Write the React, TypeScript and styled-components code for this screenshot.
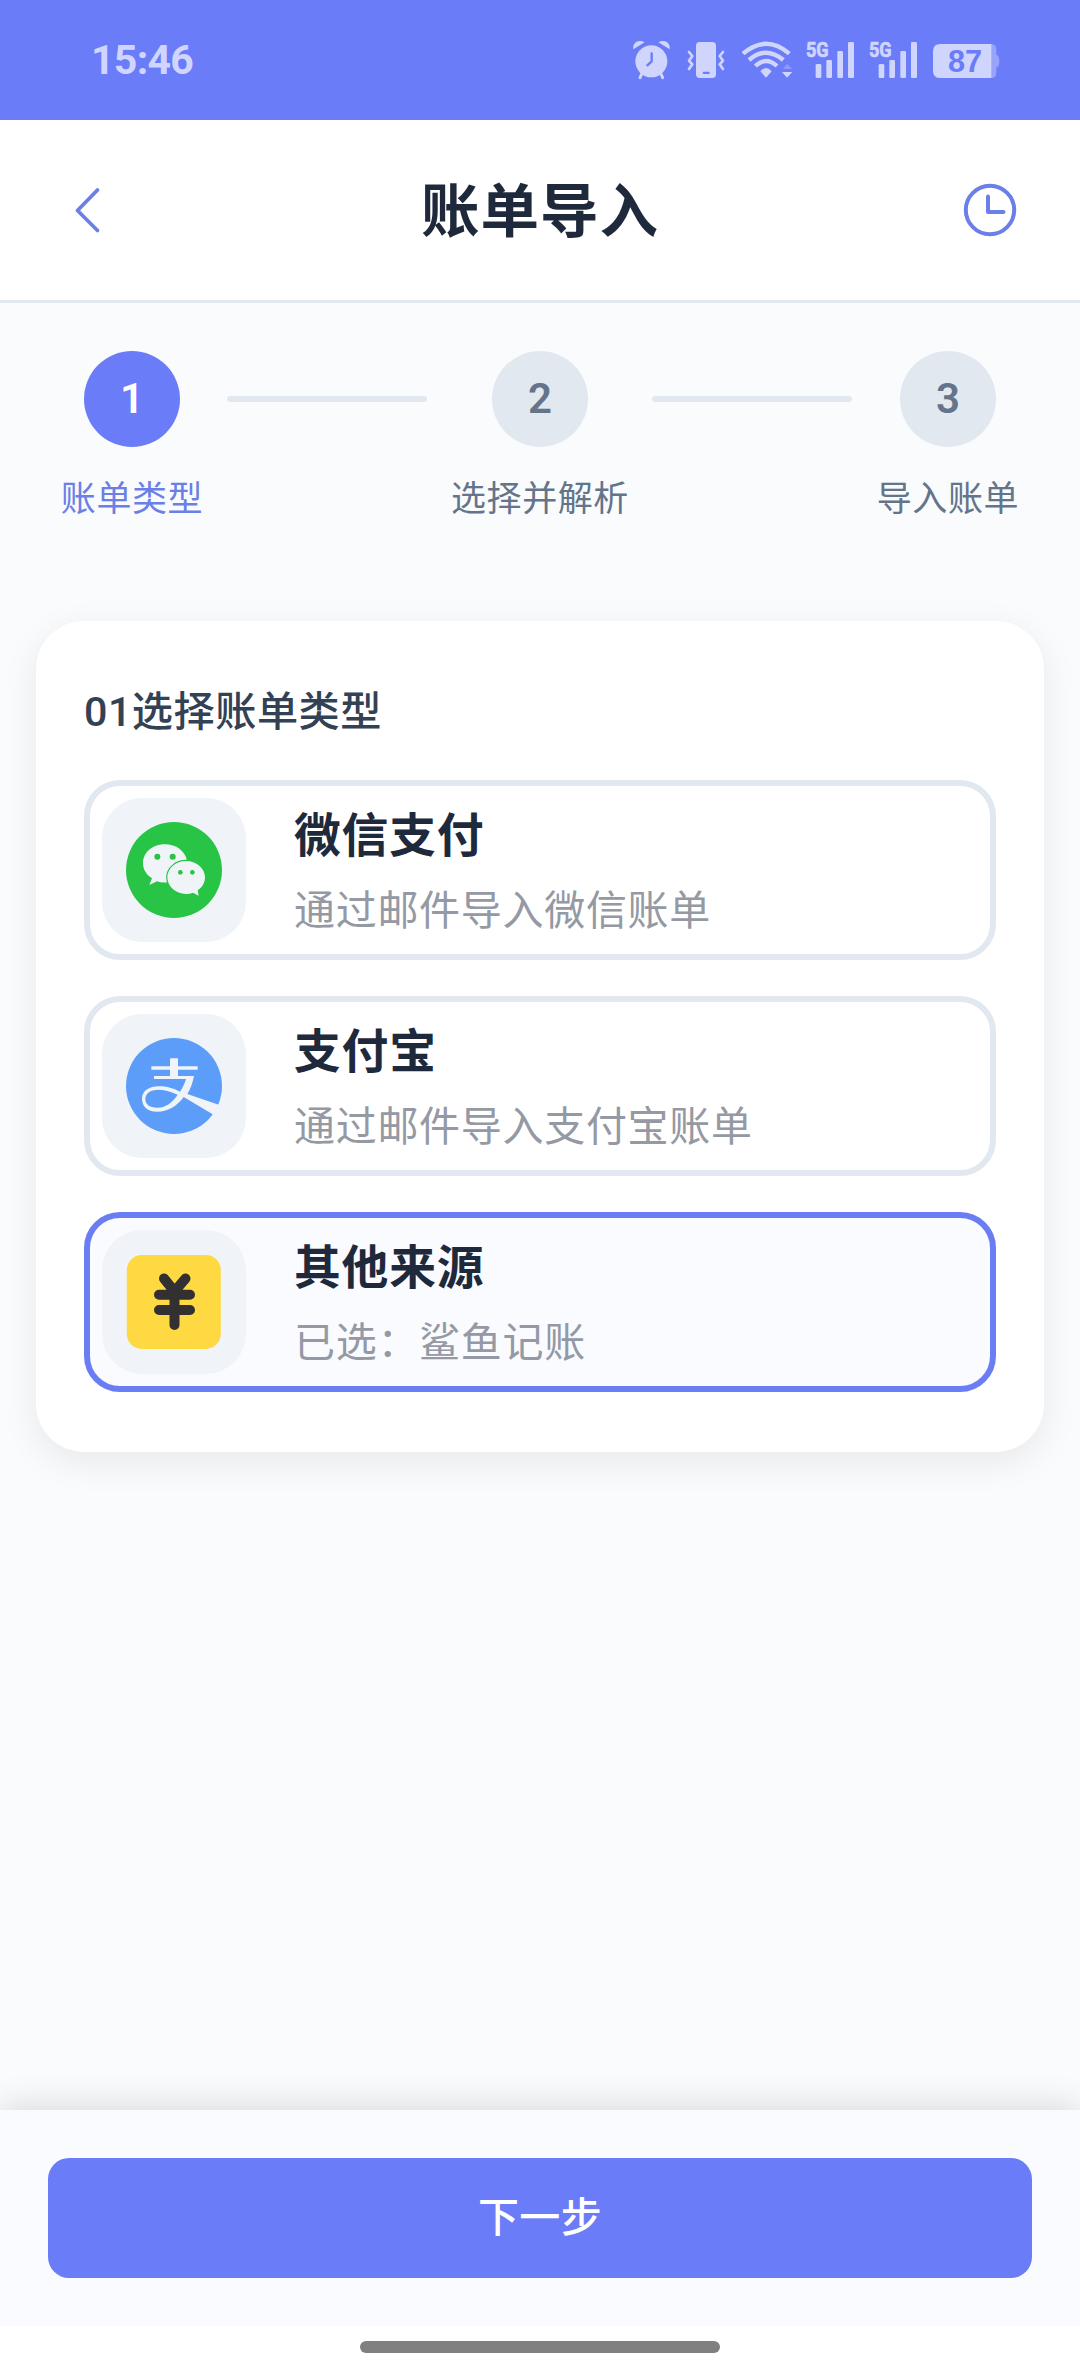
import React from "react";
import styled, { createGlobalStyle } from "styled-components";

const color = {
  primary: "#6a7cf8",
  accent: "#6b7fe8",
  ink: "#1e293b",
  heading: "#334155",
  muted: "#64748b",
  hint: "#9499a3",
  line: "#e2e8f0",
  page: "#f9fbfd",
  tile: "#f0f4f9",
  status: "#d0d5fd",
};

const GlobalStyle = createGlobalStyle`
  * { box-sizing: border-box; }
  body {
    margin: 0;
    font-family: Roboto, "Noto Sans CJK SC", sans-serif;
    background: #fff;
  }
  svg { display: block; flex: none; }
`;

const Screen = styled.div`
  width: 1080px;
  height: 2374px;
  display: flex;
  flex-direction: column;
  background: ${color.page};
  overflow: hidden;
`;

const StatusBar = styled.div`
  flex: none;
  height: 120px;
  padding: 0 73px 0 91px;
  display: flex;
  align-items: center;
  justify-content: space-between;
  background: ${color.primary};
`;

const Time = styled.span`
  font-size: 41px;
  line-height: 48px;
  font-weight: 700;
  letter-spacing: -0.7px;
  color: ${color.status};
`;

const StatusIcons = styled.div`
  display: flex;
  align-items: center;
  fill: ${color.status};
`;

const Header = styled.header`
  flex: none;
  height: 183px;
  padding: 0 60px;
  display: flex;
  align-items: center;
  justify-content: space-between;
  background: #fff;
  border-bottom: 3px solid ${color.line};
`;

const Title = styled.h1`
  margin: 0;
  padding-top: 3px;
  font-size: 58.5px;
  line-height: 72px;
  font-weight: 700;
  letter-spacing: 1px;
  color: ${color.ink};
`;

const HeaderButton = styled.button`
  width: 60px;
  height: 60px;
  padding: 0;
  border: 0;
  background: none;
`;

const Steps = styled.div`
  flex: none;
  display: flex;
  justify-content: space-between;
  padding: 48px 60px 0;
`;

const StepItem = styled.div`
  min-width: 144px;
  display: flex;
  flex-direction: column;
  align-items: center;
  gap: 26px;
`;

const StepCircle = styled.div<{ $active?: boolean }>`
  width: 96px;
  height: 96px;
  padding-bottom: 1px;
  border-radius: 50%;
  display: flex;
  align-items: center;
  justify-content: center;
  font-size: 42px;
  font-weight: 600;
  background: ${(p) => (p.$active ? color.primary : color.line)};
  color: ${(p) => (p.$active ? "#fff" : color.muted)};
`;

const StepLabel = styled.span<{ $active?: boolean }>`
  font-size: 35px;
  line-height: 54px;
  letter-spacing: 0.6px;
  color: ${(p) => (p.$active ? color.accent : color.muted)};
`;

const StepLine = styled.div`
  width: 200px;
  height: 6px;
  margin-top: 45px;
  border-radius: 3px;
  background: ${color.line};
`;

const Card = styled.section`
  flex: none;
  margin: 94px 36px 0;
  height: 831px;
  padding: 60px 48px;
  border-radius: 48px;
  background: #fff;
  box-shadow: 0 10px 36px rgba(0, 0, 0, 0.08);
`;

const CardTitle = styled.h2`
  margin: 0 0 36px;
  font-size: 41.2px;
  line-height: 63px;
  font-weight: 500;
  letter-spacing: 0.5px;
  color: ${color.heading};
`;

const Options = styled.div`
  display: flex;
  flex-direction: column;
  gap: 36px;
`;

const Option = styled.div<{ $selected?: boolean }>`
  height: 180px;
  padding: 0 12px;
  display: flex;
  align-items: center;
  gap: 48px;
  border: 6px solid ${(p) => (p.$selected ? "#6b7df2" : color.line)};
  border-radius: 36px;
  background: ${(p) => (p.$selected ? "#f9fbff" : "#fff")};
`;

const IconTile = styled.div`
  width: 144px;
  height: 144px;
  border-radius: 40px;
  display: flex;
  align-items: center;
  justify-content: center;
  background: ${color.tile};
`;

const OptionText = styled.div`
  display: flex;
  flex-direction: column;
  gap: 9px;
  padding-top: 4px;
`;

const OptionName = styled.span`
  font-size: 46.8px;
  line-height: 70px;
  font-weight: 700;
  letter-spacing: 0.8px;
  color: ${color.ink};
`;

const OptionHint = styled.span`
  font-size: 41px;
  line-height: 63px;
  letter-spacing: 0.7px;
  color: ${color.hint};
`;

const Footer = styled.footer`
  flex: none;
  margin-top: auto;
  padding: 48px;
  background: #f9fbfe;
  box-shadow: 0 -6px 30px rgba(0, 0, 0, 0.12);
`;

const NextButton = styled.button`
  display: block;
  width: 100%;
  height: 120px;
  padding: 0;
  border: 0;
  border-radius: 21px;
  font: 500 41px/60px Roboto, "Noto Sans CJK SC", sans-serif;
  letter-spacing: 0.4px;
  color: #fff;
  background: ${color.primary};
`;

const HomeArea = styled.div`
  flex: none;
  height: 48px;
  padding-top: 15px;
  display: flex;
  justify-content: center;
  background: #fff;
`;

const HomeBar = styled.div`
  width: 360px;
  height: 12px;
  border-radius: 6px;
  background: #808080;
`;

const AlarmIcon = () => (
  <svg width="50" height="40" viewBox="90 60 150 120">
    <circle cx="151" cy="124" r="48" />
    <path d="M97 88C94 68 112 56 131 67Z M206 88C209 68 191 56 172 67Z" />
    <path d="M122 162L117 173M180 162L185 173" fill="none" stroke={color.status} strokeWidth="9" strokeLinecap="round" />
    <path d="M152 100V124L139 136" fill="none" stroke={color.primary} strokeWidth="7" strokeLinecap="round" strokeLinejoin="round" />
  </svg>
);

const VibrateIcon = () => (
  <svg width="50" height="40" viewBox="240 60 150 120">
    <rect x="285" y="66" width="60" height="108" rx="11" />
    <rect x="305" y="155" width="21" height="7" rx="3" fill={color.primary} />
    <path
      d="M264 96L274 108L264 122L274 133L264 147M366 96L356 108L366 122L356 133L366 147"
      fill="none"
      stroke={color.status}
      strokeWidth="8"
      strokeLinecap="round"
      strokeLinejoin="round"
    />
  </svg>
);

const WifiIcon = () => (
  <svg width="70" height="40" viewBox="390 60 210 120">
    <g fill="none" stroke={color.status} strokeWidth="13">
      <path d="M426 101Q495 42 565 101" />
      <path d="M444 120Q495 76 547 120" />
      <path d="M463 138Q495 108 528 138" />
    </g>
    <path d="M478 154Q495 134 512 154L495 173Z" />
    <path d="M543 156H574L558 173Z" />
    <path d="M545 147H573L559 132Z" opacity="0.35" />
  </svg>
);

const SignalIcon = () => (
  <svg width="63" height="60" viewBox="600 30 189 180">
    <text
      x="615"
      y="110"
      fontFamily="Roboto"
      fontWeight="700"
      fontSize="62"
      stroke={color.status}
      strokeWidth="2"
      textLength="68"
      lengthAdjust="spacingAndGlyphs"
    >
      5G
    </text>
    <rect x="644" y="132" width="17" height="42" rx="4" />
    <rect x="676" y="120" width="17" height="54" rx="4" />
    <rect x="709" y="93" width="17" height="81" rx="4" />
    <rect x="741" y="66" width="18" height="108" rx="4" />
  </svg>
);

const BatteryIcon = () => (
  <svg width="80" height="40" viewBox="980 60 240 120">
    <path d="M1172 72H1174Q1188 72 1188 90V104Q1197 106 1197 123T1188 142V156Q1188 174 1174 174H1172Z" opacity="0.45" />
    <path d="M1020 72H1173V174H1020Q998 174 998 152V94Q998 72 1020 72Z" />
    <text x="1043" y="157" fontFamily="Liberation Sans" fontWeight="700" fontSize="92" fill={color.primary}>
      87
    </text>
  </svg>
);

const BackIcon = () => (
  <svg width="60" height="60" viewBox="0 0 60 60" fill="none" stroke={color.accent} strokeWidth="3.8" strokeLinecap="round" strokeLinejoin="round">
    <path d="M37.5 10L17.5 30.5L37.5 50.5" />
  </svg>
);

const ClockIcon = () => (
  <svg width="60" height="60" viewBox="0 0 60 60" fill="none" stroke={color.accent} strokeWidth="4" strokeLinecap="round" strokeLinejoin="round">
    <circle cx="30" cy="30" r="24.2" />
    <path d="M28 16.5V32H43.5" />
  </svg>
);

const WechatIcon = () => (
  <svg width="96" height="96" viewBox="288 636 288 288">
    <circle cx="432" cy="780" r="144" fill="#28c445" />
    <g fill={color.tile}>
      <path d="M404 703C367 703 339 728 339 760C339 778 348 794 366 805L358 825L381 814Q395 819 412 817L471 752C465 723 439 703 404 703Z" />
      <path
        d="M468 753C437 753 412 775 412 802S437 852 468 852Q480 852 489 848L506 857L503 841C517 832 525 818 525 802C525 775 499 753 468 753Z"
        stroke="#28c445"
        strokeWidth="7"
        paintOrder="stroke"
      />
    </g>
    <g fill="#28c445">
      <circle cx="382" cy="740" r="9" />
      <circle cx="428" cy="740" r="9" />
      <circle cx="451" cy="787" r="7" />
      <circle cx="487" cy="787" r="7" />
    </g>
  </svg>
);

const AlipayIcon = () => (
  <svg width="96" height="96" viewBox="138 174 288 288">
    <circle cx="282" cy="318" r="144" fill="#5b9df8" />
    <path
      fill={color.tile}
      fillRule="evenodd"
      d="M270 238Q270 235 273 235H294V259H353V269H294V288H342C337 312 331 328 322 342L416 374L430 372V420L398 403L311 351C290 380 262 395 232 395C200 395 186 377 186 356C186 333 207 319 236 319C262 319 280 325 300 335C309 322 314 310 318 297H222V288H270V269H214V259H270ZM293 344C270 334 252 329 236 329C210 329 196 341 196 357C196 374 210 383 232 383C256 383 276 369 293 344Z"
    />
  </svg>
);

const YenIcon = () => (
  <svg width="96" height="96" viewBox="0 0 96 96">
    <rect x="0.8" y="1" width="94" height="94" rx="15" fill="#ffd942" />
    <path d="M38 24.5L48.5 37.5L59.5 24.5M48.5 37V71M33 40.7H64M33 56H64" fill="none" stroke="#333032" strokeWidth="10" strokeLinecap="round" strokeLinejoin="round" />
  </svg>
);

const steps = ["账单类型", "选择并解析", "导入账单"];

const sources = [
  { name: "微信支付", hint: "通过邮件导入微信账单", icon: <WechatIcon /> },
  { name: "支付宝", hint: "通过邮件导入支付宝账单", icon: <AlipayIcon /> },
  { name: "其他来源", hint: "已选：鲨鱼记账", icon: <YenIcon />, selected: true },
];

export default function App() {
  return (
    <>
      <GlobalStyle />
      <Screen>
        <StatusBar>
          <Time>15:46</Time>
          <StatusIcons>
            <AlarmIcon />
            <VibrateIcon />
            <WifiIcon />
            <SignalIcon />
            <SignalIcon />
            <BatteryIcon />
          </StatusIcons>
        </StatusBar>
        <Header>
          <HeaderButton>
            <BackIcon />
          </HeaderButton>
          <Title>账单导入</Title>
          <HeaderButton>
            <ClockIcon />
          </HeaderButton>
        </Header>
        <Steps>
          {steps.map((label, i) => (
            <React.Fragment key={label}>
              {i > 0 && <StepLine />}
              <StepItem>
                <StepCircle $active={i === 0}>{i + 1}</StepCircle>
                <StepLabel $active={i === 0}>{label}</StepLabel>
              </StepItem>
            </React.Fragment>
          ))}
        </Steps>
        <Card>
          <CardTitle>01选择账单类型</CardTitle>
          <Options>
            {sources.map((s) => (
              <Option key={s.name} $selected={s.selected}>
                <IconTile>{s.icon}</IconTile>
                <OptionText>
                  <OptionName>{s.name}</OptionName>
                  <OptionHint>{s.hint}</OptionHint>
                </OptionText>
              </Option>
            ))}
          </Options>
        </Card>
        <Footer>
          <NextButton>下一步</NextButton>
        </Footer>
        <HomeArea>
          <HomeBar />
        </HomeArea>
      </Screen>
    </>
  );
}
